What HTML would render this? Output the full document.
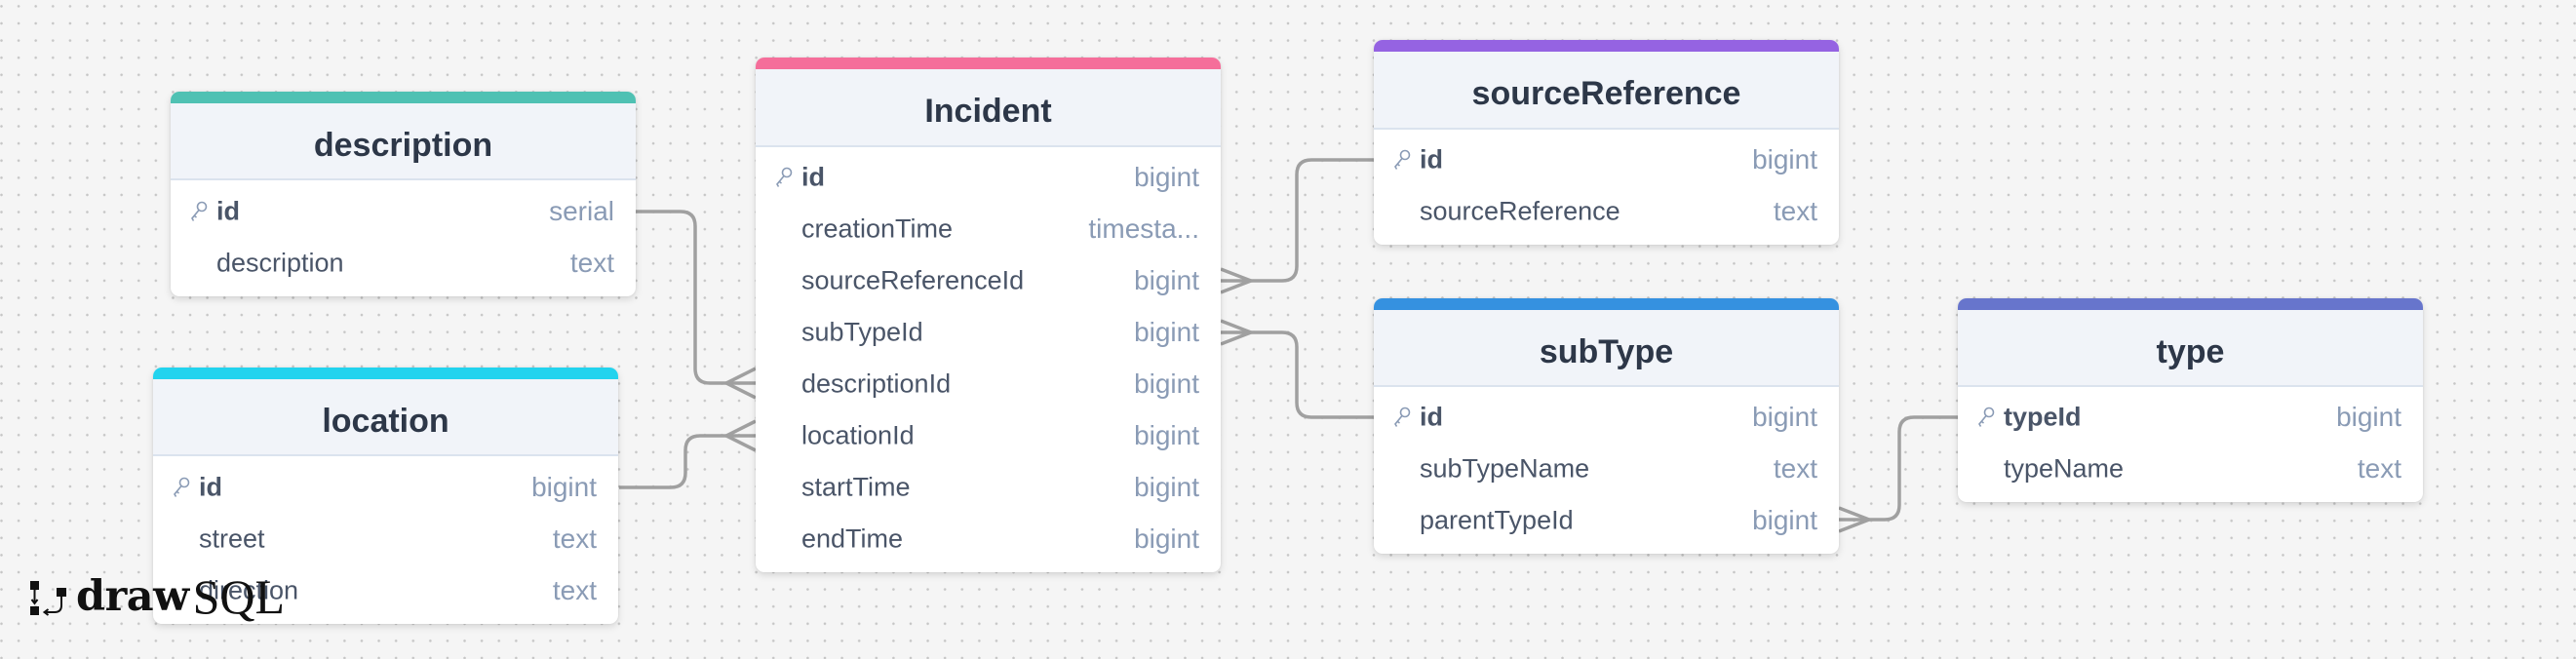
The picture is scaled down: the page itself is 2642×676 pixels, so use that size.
<!DOCTYPE html>
<html><head><meta charset="utf-8"><style>
*{margin:0;padding:0;box-sizing:border-box}
body{width:2642px;height:676px;overflow:hidden;background-color:#f5f5f5;background-image:radial-gradient(circle,#c6c6c6 1.1px,transparent 1.5px);background-size:17.6px 17.6px;background-position:-7.3px -2.4px;font-family:"Liberation Sans",sans-serif;position:relative}
.card{position:absolute;width:477px;background:#fff;border-radius:9px;box-shadow:0 3px 8px rgba(0,0,0,.13),0 0 2px rgba(0,0,0,.08);overflow:hidden;z-index:2}
.bar{height:12px}
.hd{background:#f1f4f9;border-bottom:2px solid #dbe3ee;display:flex;align-items:center;justify-content:center;font-weight:bold;font-size:34px;color:#2d3748;padding-top:9px}
.row{height:53px;position:relative;font-size:27px;color:#4a5568}
.row .n{position:absolute;left:47px;top:50%;transform:translateY(-50%)}
.row .n.b{font-weight:bold}
.row .t{position:absolute;right:22px;top:50%;transform:translateY(-50%);color:#8a9bb5;font-size:28px}
.row svg{position:absolute;left:20px;top:50%;transform:translateY(-50%)}
#lines{position:absolute;left:0;top:0;z-index:1}
.logo{position:absolute;left:28px;top:583px;z-index:5;display:flex;align-items:center}
</style></head><body>
<svg id="lines" width="2642" height="676" fill="none" stroke="#a0a0a0" stroke-width="3.5">
<path d="M652 217 H698 Q713 217 713 232 V378 Q713 393 728 393 H775"/>
<path d="M775 378 L745 393 L775 408"/>
<path d="M635 500 H688 Q703 500 703 485 V462 Q703 447 718 447 H775"/>
<path d="M775 432 L745 447 L775 462"/>
<path d="M1252 288 H1315 Q1330 288 1330 273 V179 Q1330 164 1345 164 H1409"/>
<path d="M1252 276 L1283 288 L1252 300"/>
<path d="M1252 341 H1315 Q1330 341 1330 356 V413 Q1330 428 1345 428 H1409"/>
<path d="M1252 329 L1283 341 L1252 353"/>
<path d="M1886 533 H1933 Q1948 533 1948 518 V443 Q1948 428 1963 428 H2008"/>
<path d="M1886 521 L1917 533 L1886 545"/>
</svg>

<div class="card" style="left:175px;top:94px">
<div class="bar" style="background:#4fc1b3"></div>
<div class="hd" style="height:79px">description</div>
<div style="padding:5px 0 8px">
<div class="row"><svg width="18" height="22" viewBox="0 0 18 22" fill="none" stroke="#8a9bb5" stroke-width="1.6"><circle cx="12" cy="6" r="4.5"/><path d="M9 9.5 L2 18 L3.5 20.5 M4.5 15.5 L6.5 17"/></svg><span class="n b">id</span><span class="t">serial</span></div>
<div class="row"><span class="n">description</span><span class="t">text</span></div>
</div></div>

<div class="card" style="left:157px;top:377px">
<div class="bar" style="background:#22d3ee"></div>
<div class="hd" style="height:79px">location</div>
<div style="padding:5px 0 8px">
<div class="row"><svg width="18" height="22" viewBox="0 0 18 22" fill="none" stroke="#8a9bb5" stroke-width="1.6"><circle cx="12" cy="6" r="4.5"/><path d="M9 9.5 L2 18 L3.5 20.5 M4.5 15.5 L6.5 17"/></svg><span class="n b">id</span><span class="t">bigint</span></div>
<div class="row"><span class="n">street</span><span class="t">text</span></div>
<div class="row"><span class="n">direction</span><span class="t">text</span></div>
</div></div>

<div class="card" style="left:775px;top:59px">
<div class="bar" style="background:#f56e9a"></div>
<div class="hd" style="height:80px">Incident</div>
<div style="padding:4px 0 8px">
<div class="row"><svg width="18" height="22" viewBox="0 0 18 22" fill="none" stroke="#8a9bb5" stroke-width="1.6"><circle cx="12" cy="6" r="4.5"/><path d="M9 9.5 L2 18 L3.5 20.5 M4.5 15.5 L6.5 17"/></svg><span class="n b">id</span><span class="t">bigint</span></div>
<div class="row"><span class="n">creationTime</span><span class="t">timesta...</span></div>
<div class="row"><span class="n">sourceReferenceId</span><span class="t">bigint</span></div>
<div class="row"><span class="n">subTypeId</span><span class="t">bigint</span></div>
<div class="row"><span class="n">descriptionId</span><span class="t">bigint</span></div>
<div class="row"><span class="n">locationId</span><span class="t">bigint</span></div>
<div class="row"><span class="n">startTime</span><span class="t">bigint</span></div>
<div class="row"><span class="n">endTime</span><span class="t">bigint</span></div>
</div></div>

<div class="card" style="left:1409px;top:41px">
<div class="bar" style="background:#9563e2"></div>
<div class="hd" style="height:80px">sourceReference</div>
<div style="padding:4px 0 8px">
<div class="row"><svg width="18" height="22" viewBox="0 0 18 22" fill="none" stroke="#8a9bb5" stroke-width="1.6"><circle cx="12" cy="6" r="4.5"/><path d="M9 9.5 L2 18 L3.5 20.5 M4.5 15.5 L6.5 17"/></svg><span class="n b">id</span><span class="t">bigint</span></div>
<div class="row"><span class="n">sourceReference</span><span class="t">text</span></div>
</div></div>

<div class="card" style="left:1409px;top:306px">
<div class="bar" style="background:#3591e0"></div>
<div class="hd" style="height:79px">subType</div>
<div style="padding:4px 0 8px">
<div class="row"><svg width="18" height="22" viewBox="0 0 18 22" fill="none" stroke="#8a9bb5" stroke-width="1.6"><circle cx="12" cy="6" r="4.5"/><path d="M9 9.5 L2 18 L3.5 20.5 M4.5 15.5 L6.5 17"/></svg><span class="n b">id</span><span class="t">bigint</span></div>
<div class="row"><span class="n">subTypeName</span><span class="t">text</span></div>
<div class="row"><span class="n">parentTypeId</span><span class="t">bigint</span></div>
</div></div>

<div class="card" style="left:2008px;top:306px">
<div class="bar" style="background:#6775cc"></div>
<div class="hd" style="height:79px">type</div>
<div style="padding:4px 0 8px">
<div class="row"><svg width="18" height="22" viewBox="0 0 18 22" fill="none" stroke="#8a9bb5" stroke-width="1.6"><circle cx="12" cy="6" r="4.5"/><path d="M9 9.5 L2 18 L3.5 20.5 M4.5 15.5 L6.5 17"/></svg><span class="n b">typeId</span><span class="t">bigint</span></div>
<div class="row"><span class="n">typeName</span><span class="t">text</span></div>
</div></div>

<div class="logo">
<svg width="44" height="44" viewBox="0 0 44 44"><rect x="3" y="6" width="9" height="9" fill="#111"/><rect x="3" y="32" width="9" height="9" fill="#111"/><rect x="30" y="13" width="10" height="9" fill="#111"/><path d="M7.5 15 V28 M4.5 25 L7.5 29 L10.5 25" stroke="#111" stroke-width="2" fill="none"/><path d="M35 22 V31 Q35 38 28 38 H18 M21.5 35 L17.5 38 L21.5 41" stroke="#111" stroke-width="2" fill="none"/></svg>
<span style="font-family:'DejaVu Serif',serif;font-weight:bold;font-size:43px;color:#111;margin-left:6px;letter-spacing:-0.5px">draw</span><span style="font-family:'Liberation Serif',serif;font-size:50px;color:#111;margin-left:4px">SQL</span>
</div>
</body></html>
